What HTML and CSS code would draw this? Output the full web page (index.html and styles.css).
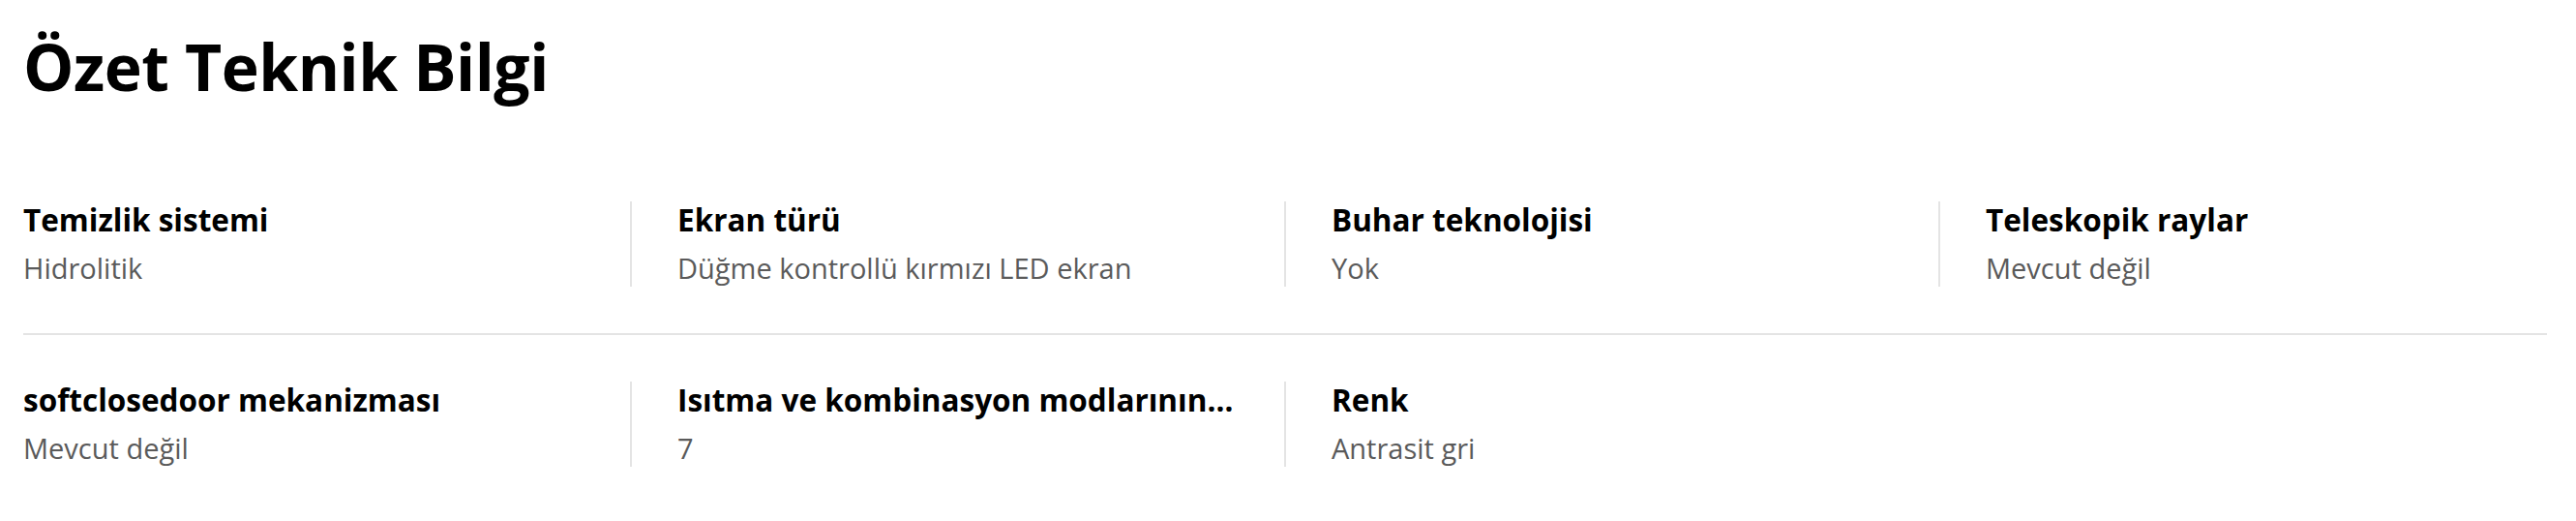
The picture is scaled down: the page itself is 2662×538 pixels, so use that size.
FILE: index.html
```html
<!DOCTYPE html>
<html lang="tr">
<head>
    <meta charset="UTF-8">
    <meta name="viewport" content="width=device-width, initial-scale=1.0">
    <title>Özet Teknik Bilgi</title>
    <link rel="stylesheet" href="styles.css">
</head>
<body>
    <div class="ozet">
        <h2 class="ozet-baslik">Özet Teknik Bilgi</h2>

        <div class="spec-row">
            <div class="spec">
                <div class="spec-label">Temizlik sistemi</div>
                <div class="spec-value">Hidrolitik</div>
            </div>
            <div class="spec">
                <div class="spec-label">Ekran türü</div>
                <div class="spec-value">Düğme kontrollü kırmızı LED ekran</div>
            </div>
            <div class="spec">
                <div class="spec-label">Buhar teknolojisi</div>
                <div class="spec-value">Yok</div>
            </div>
            <div class="spec">
                <div class="spec-label">Teleskopik raylar</div>
                <div class="spec-value">Mevcut değil</div>
            </div>
        </div>

        <div class="spec-row">
            <div class="spec">
                <div class="spec-label">softclosedoor mekanizması</div>
                <div class="spec-value">Mevcut değil</div>
            </div>
            <div class="spec">
                <div class="spec-label">Isıtma ve kombinasyon modlarının sayısı</div>
                <div class="spec-value">7</div>
            </div>
            <div class="spec">
                <div class="spec-label">Renk</div>
                <div class="spec-value">Antrasit gri</div>
            </div>
        </div>
    </div>
</body>
</html>
```

FILE: styles.css
```css
body {
    margin: 0;
    background: #ffffff;
    color: #000000;
    font-family: "Open Sans", "Noto Sans", sans-serif;
}

.ozet {
    padding: 32px 30px 0 24px;
}

.ozet-baslik {
    margin: 0 0 56px 0;
    font-size: 66px;
    line-height: 72px;
    font-weight: 700;
    letter-spacing: -0.5px;
}

.spec-row {
    display: grid;
    grid-template-columns: 580fr 629fr 629fr 629fr;
    column-gap: 47px;
    padding: 48px 0;
}

.spec-row + .spec-row {
    border-top: 2px solid #e4e4e4;
}

.spec {
    min-width: 0;
}

.spec + .spec {
    border-left: 2px solid #e4e4e4;
    padding-left: 47px;
}

.spec-label {
    font-size: 31.5px;
    line-height: 44px;
    font-weight: 700;
    margin: -3px 0 9px 0;
    white-space: nowrap;
    overflow: hidden;
    text-overflow: ellipsis;
}

.spec-value {
    font-size: 29px;
    line-height: 38px;
    color: #5a5a5a;
}
```
